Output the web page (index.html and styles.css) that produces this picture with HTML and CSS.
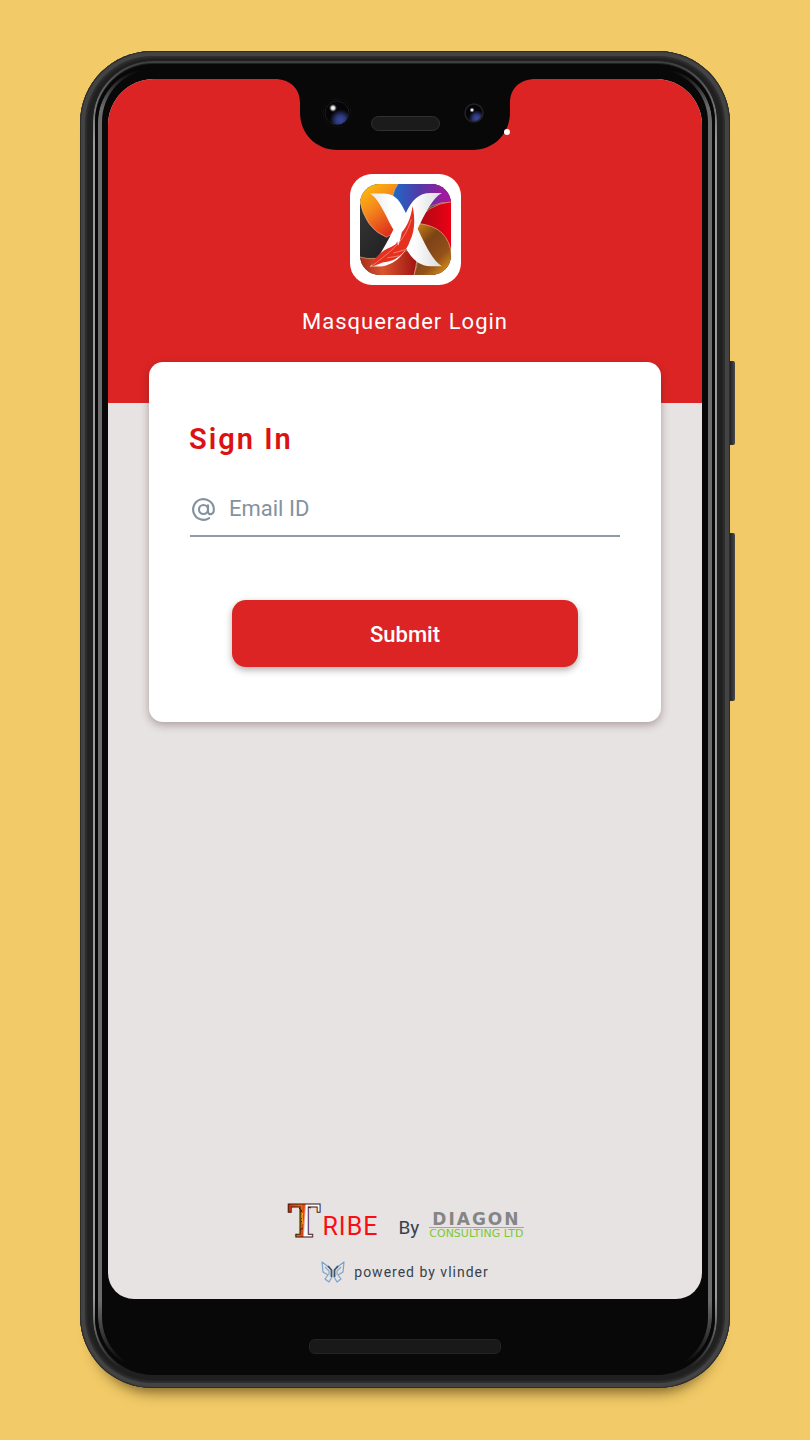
FILE: index.html
```html
<!DOCTYPE html>
<html lang="en">
<head>
<meta charset="utf-8">
<meta name="viewport" content="width=device-width, initial-scale=1">
<title>Masquerader Login</title>
<link rel="stylesheet" href="styles.css">
</head>
<body>
<div class="phone">
  <span class="side-key power"></span>
  <span class="side-key volume"></span>
  <div class="bezel">
    <svg class="notch" viewBox="274 78 262 74" aria-hidden="true">
      <defs>
        <radialGradient id="lens" cx=".65" cy=".8" r=".45"><stop offset="0" stop-color="#3b489c"/><stop offset=".45" stop-color="#2c3778"/><stop offset="1" stop-color="#050507"/></radialGradient>
        <radialGradient id="glint"><stop offset="0" stop-color="#fff"/><stop offset=".4" stop-color="#ddd"/><stop offset="1" stop-color="#888" stop-opacity="0"/></radialGradient>
      </defs>
      <path d="M274 78V79C291 79 300 89 300 103V112C300 134 316 150 338 150H472C494 150 510 134 510 112V103C510 89 519 79 536 79V78Z" fill="#080808"/>
      <circle cx="507" cy="132" r="3" fill="#fff"/>
      <circle cx="337" cy="113" r="14" fill="#030303" stroke="#111"/>
      <circle cx="337" cy="113" r="12" fill="url(#lens)" stroke="#1c1c20"/>
      <circle cx="333" cy="108" r="4" fill="url(#glint)"/>
      <circle cx="474" cy="113" r="9" fill="url(#lens)" stroke="#222226" stroke-width="1.5"/>
      <circle cx="472" cy="110" r="2.5" fill="url(#glint)"/>
      <rect x="371.500" y="116.500" width="68" height="14" rx="7" fill="#1b1b1b" stroke="#303030"/>
    </svg>
    <main class="screen">
      <header class="hero">
        <div class="app-icon">
          <svg viewBox="61 57 270 270" role="img" aria-label="App logo">
            <defs>
              <linearGradient id="sun" x1=".1" y1="0" x2=".7" y2="1"><stop offset="0" stop-color="#fdc408"/><stop offset=".45" stop-color="#f58a1c"/><stop offset="1" stop-color="#dc2a1c"/></linearGradient>
              <linearGradient id="sky"><stop offset="0" stop-color="#1b6cc8"/><stop offset=".45" stop-color="#5239a8"/><stop offset="1" stop-color="#b8109c"/></linearGradient>
              <linearGradient id="coal" x1="0" y1="0" x2="1" y2="1"><stop offset="0" stop-color="#3c3c3e"/><stop offset="1" stop-color="#0b0b0c"/></linearGradient>
              <linearGradient id="ruby"><stop offset="0" stop-color="#a30a14"/><stop offset="1" stop-color="#f00014"/></linearGradient>
              <linearGradient id="bronze" x1="0" y1="0" x2=".7" y2="1"><stop offset="0" stop-color="#d98a14"/><stop offset=".4" stop-color="#7b4316"/><stop offset=".75" stop-color="#93501a"/><stop offset="1" stop-color="#d28a18"/></linearGradient>
              <linearGradient id="clay"><stop offset="0" stop-color="#a32c18"/><stop offset=".4" stop-color="#d9542e"/><stop offset="1" stop-color="#9c1010"/></linearGradient>
              <linearGradient id="paper"><stop offset="0" stop-color="#e6e7ea"/><stop offset=".3" stop-color="#fff"/><stop offset=".6" stop-color="#fff"/><stop offset="1" stop-color="#d8dadd"/></linearGradient>
              <clipPath id="tile"><rect x="61" y="57" width="270" height="270" rx="58"/></clipPath>
            </defs>
            <g clip-path="url(#tile)">
              <rect x="61" y="57" width="270" height="270" fill="url(#coal)"/>
              <g stroke="#e8b08a" stroke-width="2">
                <path d="M57 53H178Q160 75 158 95L180 190L140 215Q75 190 59 100Z" fill="url(#sun)"/>
                <path d="M175 55H335V112Q270 105 225 165L200 170L158 95Q160 75 175 55Z" fill="url(#sky)"/>
                <path d="M335 109V275Q315 185 230 174Q255 118 335 109Z" fill="url(#ruby)"/>
                <path d="M57 273Q110 288 150 262L235 250L222 331H57Z" fill="url(#clay)"/>
                <path d="M232 174Q325 182 333 270V331H220Q243 270 230 190Z" fill="url(#bronze)"/>
              </g>
              <path d="M90 85H132C168 85 182 112 197 143C215 106 235 84 270 84H304C276 98 254 146 232 190C252 232 275 284 304 301H270C235 300 215 278 198 250C178 282 150 300 120 302H90C112 284 138 238 160 192C138 154 118 100 90 85Z" fill="url(#paper)"/>
              <path d="M217 122C226 165 222 200 210 224C198 262 166 288 130 289L94 303C106 270 126 256 148 246C164 239 171 234 171 226L174 240C179 228 182 216 185 200C199 184 212 160 217 122Z" fill="#e6301f"/>
              <path d="M92 304C140 264 192 236 213 162M160 262L194 252M142 276L178 270" fill="none" stroke="#f7a292" stroke-width="2"/>
            </g>
          </svg>
        </div>
        <h1 class="title">Masquerader Login</h1>
      </header>
      <form class="card">
        <h2 class="heading">Sign In</h2>
        <div class="field">
          <label for="email"><svg class="at" viewBox="0 0 24 24" role="img" aria-label="Email ID"><g fill="none" stroke="#84929f" stroke-width="1.900" stroke-linecap="round"><circle cx="12" cy="12" r="4"/><path d="M16 8.200V13.500C16 17.500 21.200 17 21.200 12A9.200 9.200 0 1 0 17 19.700"/></g></svg></label>
          <input id="email" type="email" placeholder="Email ID">
        </div>
        <button class="submit" type="submit">Submit</button>
      </form>
      <footer class="credits">
        <div class="brands">
          <span class="tribe">
            <svg viewBox="0 0 36 36" class="fire-t">
              <defs><linearGradient id="fire" x1="0" y1="0" x2="1" y2=".1"><stop offset="0" stop-color="#c52206"/><stop offset=".2" stop-color="#e8480c"/><stop offset=".42" stop-color="#f36a10"/><stop offset=".52" stop-color="#e23c08"/><stop offset=".58" stop-color="#fff"/><stop offset="1" stop-color="#fff"/></linearGradient></defs>
              <text x="18" y="34" text-anchor="middle" class="fire-letter">T</text>
              <path d="M13 5l3 3-2 1M15 15l2 2-2 2M14 27l3-2M22 4l3 1" fill="none" stroke="#4a1608"/>
              <path d="M17 10l-1 3 1 8" fill="none" stroke="#fbb018"/>
            </svg>
            <span class="ribe">RIBE</span>
          </span>
          <span class="by">By</span>
          <span class="diagon"><span class="diagon-name">DIAGON</span><span class="diagon-sub">CONSULTING LTD</span></span>
        </div>
        <div class="powered">
          <svg class="butterfly" viewBox="0 0 24 22" aria-hidden="true">
            <g fill="none" stroke-width="1.200" stroke-linejoin="round">
              <path stroke="#7ba3cb" d="M9 7L1 1L2 11L7 14L4 18L8 21L11 16M15 7L23 1L22 11L17 14L20 18L16 21L13 16"/>
              <path stroke="#3c5573" d="M7 5L10.500 9V16M17 5L13.500 9V16" stroke-width="1.800"/>
              <path stroke="#8fa9c4" d="M4 6L8 10V14M20 6L16 10V14"/>
            </g>
          </svg>
          <span>powered by vlinder</span>
        </div>
      </footer>
    </main>
    <div class="speaker"></div>
  </div>
</div>
</body>
</html>
```
FILE: styles.css
```css
* { box-sizing: border-box; }

body {
  margin: 0;
  min-height: 100vh;
  padding: 51px 80px 52px;
  display: flex;
  background: #f2ca67;
  font-family: Roboto, "Liberation Sans", sans-serif;
}

.phone {
  position: relative;
  flex: 1;
  display: flex;
  padding: 13px 15px;
  border-radius: 72px;
  background: #202020;
  box-shadow:
    inset 0 0 0 1px #2c2c2c,
    inset 0 0 0 5px #434343,
    inset 0 0 2px 7px #303030,
    0 18px 14px -14px rgba(70, 50, 10, .7);
}

.phone::before {
  content: "";
  position: absolute;
  inset: 10px 13px;
  border: 2px solid #9a9a9a;
  border-radius: 60px;
  -webkit-mask-image: linear-gradient(rgba(0, 0, 0, .25), #000 80px, #000 calc(100% - 80px), transparent calc(100% - 10px));
  mask-image: linear-gradient(rgba(0, 0, 0, .25), #000 80px, #000 calc(100% - 80px), transparent calc(100% - 10px));
}

.side-key {
  position: absolute;
  right: -5px;
  width: 5px;
  border-radius: 0 2px 2px 0;
  background: linear-gradient(90deg, #222, #4a4a4a);
}
.power { top: 310px; height: 84px; }
.volume { top: 482px; height: 168px; }

.bezel {
  position: relative;
  flex: 1;
  display: flex;
  flex-direction: column;
  padding: 15px 13px 21px;
  border-radius: 58px;
  background: #080808;
}

.bezel::before {
  content: "";
  position: absolute;
  inset: 4px 3px;
  border: 4px solid #6c6c6c;
  border-top-width: 2px;
  border-bottom-width: 2px;
  border-radius: 54px;
  -webkit-mask-image: linear-gradient(transparent 2px, #000 40px, #000 calc(100% - 70px), transparent calc(100% - 8px));
  mask-image: linear-gradient(transparent 2px, #000 40px, #000 calc(100% - 70px), transparent calc(100% - 8px));
}

.notch {
  position: absolute;
  z-index: 1;
  top: 14px;
  left: 50%;
  width: 262px;
  margin-left: -131px;
}

.screen {
  position: relative;
  flex: 1;
  display: flex;
  flex-direction: column;
  overflow: hidden;
  border-radius: 46px 46px 26px 26px;
  background: #e7e3e2;
}

.hero {
  display: flex;
  flex-direction: column;
  align-items: center;
  padding: 95px 20px 66px;
  background: #dc2424;
}

.app-icon {
  padding: 10px;
  border-radius: 22px;
  background: #fff;
}
.app-icon svg { display: block; width: 91px; height: 91px; }

.title {
  margin: 22px 0 0;
  font-size: 22px;
  line-height: 30px;
  font-weight: 400;
  letter-spacing: 1px;
  color: #fff;
}

.card {
  display: flex;
  flex-direction: column;
  margin: -41px 41px 0;
  padding: 57px 40px 55px;
  border-radius: 14px;
  background: #fff;
  box-shadow: 0 3px 8px rgba(60, 30, 30, .35);
}

.heading {
  margin: 0;
  font-size: 29px;
  line-height: 40px;
  font-weight: 600;
  letter-spacing: 2px;
  color: #dc1111;
}

.field {
  display: flex;
  align-items: center;
  gap: 12px;
  margin: 24px 1px 63px;
  height: 54px;
  border-bottom: 2px solid #9299ab;
}
.at { display: block; width: 27px; height: 27px; }
.field input {
  flex: 1;
  min-width: 0;
  padding: 0;
  border: 0;
  outline: 0;
  background: none;
  font: 22px/30px Roboto, "Liberation Sans", sans-serif;
  color: #333;
}
.field input::placeholder { color: #84929f; opacity: 1; }

.submit {
  height: 67px;
  margin: 0 43px;
  padding: 2px 0 0;
  border: 0;
  border-radius: 14px;
  background: #dc2424;
  box-shadow: 0 3px 7px rgba(40, 20, 20, .35);
  font: 500 22px/30px Roboto, "Liberation Sans", sans-serif;
  color: #fff;
}

.credits {
  display: flex;
  flex-direction: column;
  align-items: center;
  gap: 22px;
  margin-top: auto;
  padding-bottom: 16px;
}

.brands { display: flex; align-items: flex-end; gap: 10px; }
.tribe { display: flex; align-items: flex-end; margin-right: 10px; }
.fire-t { width: 36px; height: 36px; overflow: visible; }
.fire-letter {
  font: bold 44px "DejaVu Serif", serif;
  fill: url(#fire);
  stroke: #4a1a12;
  stroke-width: 1px;
}
.ribe { font-size: 25px; line-height: 24px; letter-spacing: 1px; color: #fb0d16; }
.by { font-size: 19px; line-height: 22px; color: #37414b; }

.diagon { display: flex; flex-direction: column; align-items: center; font-family: "DejaVu Sans", sans-serif; }
.diagon-name { font-size: 17px; line-height: 16px; font-weight: 700; letter-spacing: 2px; color: #858585; }
.diagon-sub { border-top: 1px solid #8cc63f; font-size: 11px; line-height: 11px; color: #7cc832; }

.powered {
  display: flex;
  align-items: center;
  gap: 9px;
  font-size: 14px;
  line-height: 20px;
  letter-spacing: 1px;
  color: #37414b;
}
.butterfly { width: 24px; height: 22px; }

.speaker {
  width: 192px;
  height: 15px;
  margin: 40px auto 0;
  border: 1px solid #242424;
  border-radius: 6px;
  background: #191919;
}
```
